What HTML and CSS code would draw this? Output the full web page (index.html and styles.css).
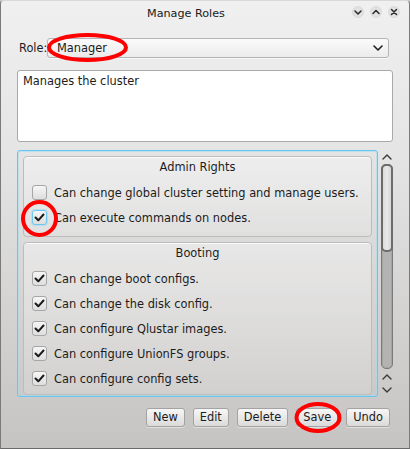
FILE: index.html
```html
<!DOCTYPE html>
<html>
<head>
<meta charset="utf-8">
<link rel="stylesheet" href="styles.css">
</head>
<body>
<div class="window">
  <div class="titlebar">
    <span class="title">Manage Roles</span>
    <div class="wm-buttons">
      <svg class="wm-btn" viewBox="0 0 12 12" width="12" height="12"><circle cx="6" cy="6" r="5.5" class="wm-circle"/><polyline points="3,5 6,8 9,5" class="wm-glyph"/></svg>
      <svg class="wm-btn" viewBox="0 0 12 12" width="12" height="12"><circle cx="6" cy="6" r="5.5" class="wm-circle"/><polyline points="3,7.5 6,4.5 9,7.5" class="wm-glyph"/></svg>
      <svg class="wm-btn" viewBox="0 0 12 12" width="12" height="12"><circle cx="6" cy="6" r="5.5" class="wm-circle"/><path d="M3.5 3.5 L8.5 8.5 M8.5 3.5 L3.5 8.5" class="wm-glyph"/></svg>
    </div>
  </div>
  <div class="content">
    <div class="role-row">
      <span class="role-label">Role:</span>
      <div class="combo">
        <span class="combo-text">Manager</span>
        <svg class="combo-arrow" viewBox="0 0 10 6" width="10" height="6"><polyline points="1,1 5,5 9,1"/></svg>
      </div>
    </div>
    <div class="desc">Manages the cluster</div>
    <div class="scroll-region">
      <div class="viewport">
        <div class="group group-admin">
          <div class="group-title">Admin Rights</div>
          <div class="row"><span class="cb"></span><span class="row-text">Can change global cluster setting and manage users.</span></div>
          <div class="row"><span class="cb cb-focus"><svg viewBox="0 0 15 15" width="15" height="15"><polyline points="3.5,7.5 6.3,10.3 11.5,4.5" class="tick"/></svg></span><span class="row-text">Can execute commands on nodes.</span></div>
        </div>
        <div class="group group-boot">
          <div class="group-title">Booting</div>
          <div class="row"><span class="cb"><svg viewBox="0 0 15 15" width="15" height="15"><polyline points="3.5,7.5 6.3,10.3 11.5,4.5" class="tick"/></svg></span><span class="row-text">Can change boot configs.</span></div>
          <div class="row"><span class="cb"><svg viewBox="0 0 15 15" width="15" height="15"><polyline points="3.5,7.5 6.3,10.3 11.5,4.5" class="tick"/></svg></span><span class="row-text">Can change the disk config.</span></div>
          <div class="row"><span class="cb"><svg viewBox="0 0 15 15" width="15" height="15"><polyline points="3.5,7.5 6.3,10.3 11.5,4.5" class="tick"/></svg></span><span class="row-text">Can configure Qlustar images.</span></div>
          <div class="row"><span class="cb"><svg viewBox="0 0 15 15" width="15" height="15"><polyline points="3.5,7.5 6.3,10.3 11.5,4.5" class="tick"/></svg></span><span class="row-text">Can configure UnionFS groups.</span></div>
          <div class="row"><span class="cb"><svg viewBox="0 0 15 15" width="15" height="15"><polyline points="3.5,7.5 6.3,10.3 11.5,4.5" class="tick"/></svg></span><span class="row-text">Can configure config sets.</span></div>
        </div>
      </div>
      <div class="scrollbar">
        <div class="sb-top"><svg viewBox="0 0 10 6" width="10" height="6" class="caret"><polyline points="1,5 5,1 9,5"/></svg></div>
        <div class="groove"><div class="handle"></div></div>
        <div class="sb-bottom">
          <svg viewBox="0 0 10 6" width="10" height="6" class="caret"><polyline points="1,5 5,1 9,5"/></svg>
          <svg viewBox="0 0 10 6" width="10" height="6" class="caret"><polyline points="1,1 5,5 9,1"/></svg>
        </div>
      </div>
    </div>
    <div class="buttons">
      <span class="btn">New</span>
      <span class="btn">Edit</span>
      <span class="btn">Delete</span>
      <span class="btn">Save</span>
      <span class="btn">Undo</span>
    </div>
  </div>
  <svg class="annot" viewBox="0 0 410 449" width="410" height="449">
    <ellipse cx="87.5" cy="47.5" rx="38.5" ry="12.5"/>
    <ellipse cx="39.5" cy="218.5" rx="16.5" ry="16.5"/>
    <ellipse cx="318" cy="417.5" rx="21.5" ry="13.5"/>
  </svg>
</div>
</body>
</html>
```
FILE: styles.css
```css
html, body {
  margin: 0;
  padding: 0;
  background: #c8c6c4;
}
.window {
  position: relative;
  width: 410px;
  height: 449px;
  box-sizing: border-box;
  border-left: 1px solid #7a7a7a;
  border-right: 1px solid #7a7a7a;
  border-bottom: 1px solid #6a6a6a;
  border-top: 1px solid #d8d8d8;
  border-radius: 4px 4px 0 0;
  background: linear-gradient(to bottom, #f0f0f0 0%, #e4e4e4 35%, #c6c4c2 100%);
  font-family: "DejaVu Sans", sans-serif;
  font-size: 11.4px;
  color: #1c1c1c;
  overflow: hidden;
}
.titlebar {
  height: 25px;
  display: flex;
  align-items: center;
}
.title {
  padding-left: 146px;
  font-size: 11.2px;
  color: #202020;
  line-height: 22px;
}
.wm-buttons {
  margin-left: auto;
  margin-right: 9px;
  display: flex;
  gap: 6px;
  align-items: center;
  padding-bottom: 3px;
}
.wm-circle {
  fill: #e2e2e2;
  stroke: #d0d0d0;
  stroke-width: 0.6;
}
.wm-glyph {
  fill: none;
  stroke: #2a2a2a;
  stroke-width: 1.5;
  stroke-linecap: round;
  stroke-linejoin: round;
}
.content {
  padding: 0 16px 0 16px;
}
.role-row {
  margin-top: 12px;
  height: 20px;
  display: flex;
  align-items: center;
}
.role-label {
  width: 28px;
  margin-left: 2px;
}
.combo {
  flex: 1;
  height: 20px;
  margin-right: 4px;
  box-sizing: border-box;
  border: 1px solid #b4b4b4;
  border-radius: 3px;
  background: linear-gradient(to bottom, #fbfbfb, #ebebeb);
  box-shadow: 0 1px 0 rgba(255,255,255,0.6);
  display: flex;
  align-items: center;
  padding: 0 5px 0 9px;
}
.combo-text {
  flex: 1;
}
.combo-arrow polyline {
  fill: none;
  stroke: #1e1e1e;
  stroke-width: 1.6;
  stroke-linecap: round;
  stroke-linejoin: round;
}
.desc {
  margin-top: 12px;
  height: 72px;
  box-sizing: border-box;
  border: 1px solid #a9a9a9;
  border-radius: 3px;
  background: #ffffff;
  padding: 3px 5px;
  line-height: 15px;
}
.scroll-region {
  margin-top: 8px;
  height: 247px;
  display: flex;
}
.viewport {
  width: 361px;
  height: 247px;
  box-sizing: border-box;
  border: 1px solid #66c6f0;
  border-radius: 3px;
  box-shadow: inset 0 0 0 1px rgba(160, 220, 246, 0.55);
  padding: 5px;
  overflow: hidden;
}
.group {
  box-sizing: border-box;
  border: 1px solid #bcbcbc;
  border-radius: 4px;
  background: linear-gradient(to bottom, rgba(255,255,255,0.35), rgba(255,255,255,0.12));
  box-shadow: inset 0 1px 0 rgba(255,255,255,0.8);
}
.group-admin {
  height: 81px;
}
.group-boot {
  margin-top: 5px;
  height: 153px;
}
.group-title {
  height: 23px;
  line-height: 21px;
  text-align: center;
}
.row {
  height: 25px;
  display: flex;
  align-items: center;
  padding-left: 8px;
}
.cb {
  width: 15px;
  height: 15px;
  box-sizing: border-box;
  border: 1px solid #a6a6a6;
  border-radius: 3px;
  background: linear-gradient(to bottom, #f6f6f6, #dedede);
  margin-right: 7px;
  position: relative;
  display: block;
}
.cb svg {
  position: absolute;
  left: -1px;
  top: -1px;
}
.cb-focus {
  border-color: #6cc8f0;
  box-shadow: 0 0 0 1px rgba(150, 215, 245, 0.5);
}
.tick {
  fill: none;
  stroke: #1a1a1a;
  stroke-width: 2;
  stroke-linecap: round;
  stroke-linejoin: round;
}
.scrollbar {
  width: 12px;
  margin-left: 3px;
  display: flex;
  flex-direction: column;
}
.sb-top {
  height: 14px;
  display: flex;
  justify-content: center;
  align-items: center;
}
.caret polyline {
  fill: none;
  stroke: #3a3a3a;
  stroke-width: 1.4;
  stroke-linecap: round;
  stroke-linejoin: round;
}
.groove {
  height: 205px;
  box-sizing: border-box;
  border: 1px solid #7a7a7a;
  border-radius: 5px;
  background: #b3b3b3;
  box-shadow: inset 0 0 0 1px rgba(0,0,0,0.08);
}
.handle {
  height: 88px;
  margin: -1px;
  box-sizing: border-box;
  border: 2px solid #6c6c6c;
  border-radius: 5px;
  background: linear-gradient(to right, #dcdcdc, #e8e8e8, #d6d6d6);
}
.sb-bottom {
  display: flex;
  flex-direction: column;
  align-items: center;
  gap: 7px;
  padding-top: 5px;
}
.buttons {
  margin-top: 11px;
  display: flex;
  justify-content: flex-end;
  gap: 8px;
  padding-right: 3px;
}
.btn {
  height: 19px;
  box-sizing: border-box;
  padding: 0 6px;
  line-height: 17px;
  border: 1px solid #a3a3a3;
  border-radius: 3px;
  background: linear-gradient(to bottom, #f7f7f7, #dadada);
  box-shadow: 0 1px 0 rgba(255,255,255,0.45);
}
.annot {
  position: absolute;
  left: -1px;
  top: -1px;
  pointer-events: none;
}
.annot ellipse {
  fill: none;
  stroke: #ff0000;
  stroke-width: 4;
}
```
